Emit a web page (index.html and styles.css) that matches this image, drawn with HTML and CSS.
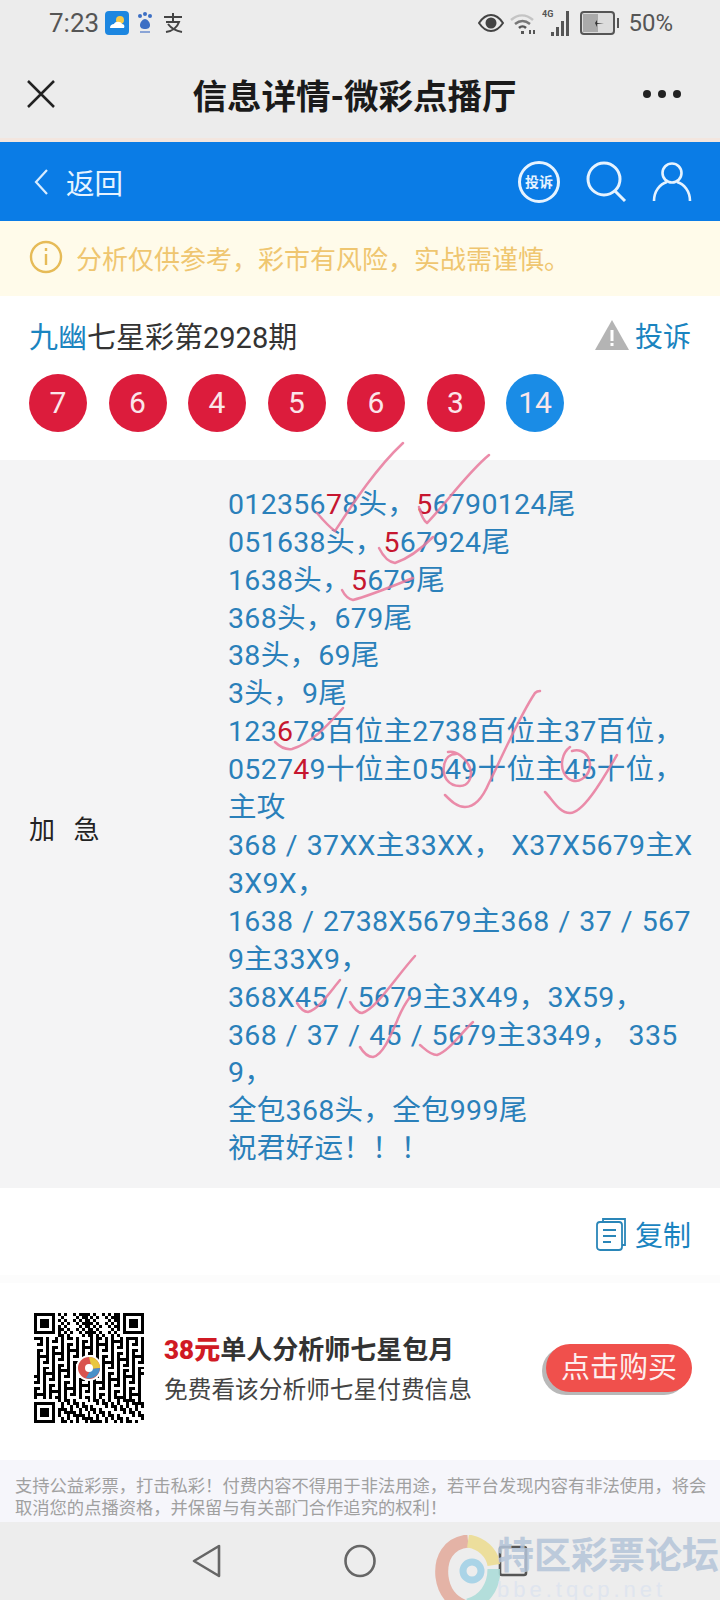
FILE: index.html
```html
<!DOCTYPE html>
<html lang="zh-CN">
<head>
    <meta charset="UTF-8">
    <title>信息详情-微彩点播厅</title>
    <link rel="stylesheet" href="styles.css">
</head>
<body>
    <div class="page">
        <div class="status">
            <div class="status-left">
                <span class="time">7:23</span>
                <svg class="st-app" width="24" height="24" viewBox="0 0 24 24"><rect width="24" height="24" rx="4" fill="#1c86e0"/><circle cx="15" cy="9" r="4" fill="#f7c948"/><path d="M5 17c0-3 2-4 4-4 1-3 7-3 8 0 2 0 3 2 2 4z" fill="#fff"/></svg>
                <svg class="st-app" width="20" height="26" viewBox="0 0 20 26"><circle cx="5" cy="6" r="2" fill="#3d6fc4"/><circle cx="10" cy="4" r="2" fill="#3d6fc4"/><circle cx="15" cy="6" r="2" fill="#3d6fc4"/><path d="M5 15c0-3 3-6 5-6s5 3 5 6-2 4-5 4-5-1-5-4z" fill="#3d6fc4"/><rect x="5" y="21" width="10" height="2" fill="#8aa4d6"/></svg>
                <svg class="st-app" width="24" height="24" viewBox="0 0 24 24" fill="none" stroke="#444" stroke-width="2"><path d="M3 6h18M12 2v8M5 11h13c-2 6-7 9-13 10M7 13c3 4 8 7 14 8"/></svg>
            </div>
            <div class="status-right">
                <svg width="26" height="20" viewBox="0 0 26 20"><path d="M1 10c4-6 8-8 12-8s8 2 12 8c-4 6-8 8-12 8S5 16 1 10z" fill="none" stroke="#444" stroke-width="2"/><circle cx="13" cy="10" r="5.5" fill="#444"/></svg>
                <svg width="26" height="26" viewBox="0 0 26 26" fill="none" stroke-width="2.5"><path d="M1 10c7-6 15-6 22 0" stroke="#c4c4c4"/><path d="M5 14c5-4 10-4 15 0" stroke="#777"/><path d="M9 18c2-2 5-2 7 0" stroke="#555"/><rect x="11" y="21" width="3" height="3" fill="#555" stroke="none"/><rect x="19" y="20" width="2" height="4" fill="#555" stroke="none"/><rect x="23" y="20" width="2" height="4" fill="#555" stroke="none"/></svg>
                <svg class="st-signal" width="32" height="30" viewBox="0 0 32 30" fill="#555"><text x="0" y="9" class="st-4g">4G</text><rect x="9" y="24" width="3" height="4"/><rect x="14" y="19" width="3" height="9"/><rect x="19" y="13" width="3" height="15"/><rect x="24" y="3" width="3" height="25"/></svg>
                <svg width="40" height="26" viewBox="0 0 40 26"><rect x="1" y="2" width="33" height="22" rx="3" fill="#ddd" stroke="#555" stroke-width="2"/><rect x="3" y="4" width="15" height="18" fill="#aaa"/><path d="M8 13h7l2-3v3h7l-7 1v3l-2-4H8z" fill="#333"/><rect x="37" y="8" width="2" height="10" fill="#555"/></svg>
                <span class="battery">50%</span>
            </div>
        </div>

        <div class="titlebar">
            <svg class="title-close" width="30" height="30" viewBox="0 0 30 30" fill="none" stroke="#222" stroke-width="2.5"><path d="M2 2l26 26M28 2L2 28"/></svg>
            <h1>信息详情-微彩点播厅</h1>
            <div class="title-more"><i></i><i></i><i></i></div>
        </div>

        <header class="topnav">
            <div class="back">
                <svg width="16" height="28" viewBox="0 0 16 28" fill="none" stroke="#d8ecff" stroke-width="2.2"><path d="M14 2L3 14l11 12"/></svg>
                <span>返回</span>
            </div>
            <div class="topnav-icons">
                <div class="complain-badge">投诉</div>
                <svg width="42" height="42" viewBox="0 0 42 42" fill="none" stroke="#e6f3ff" stroke-width="3"><circle cx="18" cy="18" r="16"/><path d="M29 30l10 10"/></svg>
                <svg width="40" height="42" viewBox="0 0 40 42" fill="none" stroke="#e6f3ff" stroke-width="2.6"><circle cx="20" cy="12" r="9.5"/><path d="M2 40c0-10 6-17 13-19M38 40c0-10-6-17-13-19"/></svg>
            </div>
        </header>

        <div class="notice">
            <svg width="34" height="34" viewBox="0 0 34 34" fill="none" stroke="#e6bb57" stroke-width="2.4"><circle cx="17" cy="17" r="15"/><path d="M17 14v11M17 8v3"/></svg>
            <span>分析仅供参考，彩市有风险，实战需谨慎。</span>
        </div>

        <section class="issue">
            <div class="issue-head">
                <div class="issue-title"><span class="author">九幽</span>七星彩第2928期</div>
                <div class="issue-report">
                    <svg width="36" height="32" viewBox="0 0 36 32"><path d="M18 1l17 30H1z" fill="#b4b4b4"/><rect x="16.500" y="11" width="3" height="11" fill="#fff"/><rect x="16.500" y="24" width="3" height="3" fill="#fff"/></svg>
                    <span>投诉</span>
                </div>
            </div>
            <div class="balls">
                <span class="ball">7</span>
                <span class="ball">6</span>
                <span class="ball">4</span>
                <span class="ball">5</span>
                <span class="ball">6</span>
                <span class="ball">3</span>
                <span class="ball ball-blue">14</span>
            </div>
        </section>

        <section class="content">
            <div class="content-label">加 急</div>
            <div class="content-text">
                <div>012356<em>7</em>8头，<em>5</em>6790124尾</div>
                <div>051638头，<em>5</em>67924尾</div>
                <div>1638头，<em>5</em>679尾</div>
                <div>368头，679尾</div>
                <div>38头，69尾</div>
                <div>3头，9尾</div>
                <div>123<em>6</em>78百位主2738百位主37百位，</div>
                <div>0527<em>4</em>9十位主0549十位主45十位，</div>
                <div>主攻</div>
                <div>368 / 37XX主33XX，&nbsp;X37X5679主X</div>
                <div>3X9X，</div>
                <div>1638 / 2738X5679主368 / 37 / 567</div>
                <div>9主33X9，</div>
                <div>368X45 / 5679主3X49，3X59，</div>
                <div>368 / 37 / 45 / 5679主3349，&nbsp;335</div>
                <div>9，</div>
                <div>全包368头，全包999尾</div>
                <div>祝君好运！！！</div>
            </div>
        </section>

        <div class="copy-row">
            <svg width="32" height="34" viewBox="0 0 32 34" fill="none" stroke="#2a86b8" stroke-width="1.8"><path d="M8 5V2h22v26h-3"/><rect x="2" y="5" width="25" height="28" rx="3"/><path d="M8 13h13M8 19h13M8 25h8"/></svg>
            <span>复制</span>
        </div>

        <section class="promo">
            <div class="qr">
                <svg id="qr-code" width="110" height="110" viewBox="0 0 37 37" shape-rendering="crispEdges"></svg>
                <svg class="qr-logo" width="26" height="26" viewBox="0 0 26 26"><circle cx="13" cy="13" r="13" fill="#fff"/><circle cx="13" cy="13" r="11" fill="#d9534f"/><path d="M13 2a11 11 0 0 1 11 11l-8 1z" fill="#e8c63f"/><path d="M24 13a11 11 0 0 1-14 10l5-9z" fill="#4a90c8"/><circle cx="13" cy="13" r="4" fill="#fff"/></svg>
            </div>
            <div class="promo-text">
                <div class="promo-title"><b>38元</b>单人分析师七星包月</div>
                <div class="promo-sub">免费看该分析师七星付费信息</div>
            </div>
            <div class="buy-btn">点击购买</div>
        </section>

        <div class="disclaimer">支持公益彩票，打击私彩！付费内容不得用于非法用途，若平台发现内容有非法使用，将会取消您的点播资格，并保留与有关部门合作追究的权利！</div>

        <nav class="sysnav">
            <svg width="30" height="34" viewBox="0 0 30 34" fill="none" stroke="#666" stroke-width="2.6" stroke-linejoin="round"><path d="M27 2v30L2 17z"/></svg>
            <svg width="32" height="34" viewBox="0 0 32 34" fill="none" stroke="#666" stroke-width="2.6"><ellipse cx="16" cy="17" rx="14.500" ry="15"/></svg>
            <svg width="30" height="32" viewBox="0 0 30 32" fill="none" stroke="#555" stroke-width="2.6"><rect x="2" y="2" width="26" height="28" rx="2"/></svg>
        </nav>

        <!-- 水印 -->
        <div class="watermark">
            <svg width="66" height="84" viewBox="0 0 66 84" fill="none" stroke-width="13"><path d="M34 6C14 8 6 24 8 42c2 16 12 26 24 30" stroke="#e3a99a"/><path d="M34 6c14 2 24 12 26 24" stroke="#ecdc8e"/><path d="M60 34c0 18-10 32-26 36" stroke="#a9dcd8"/><circle cx="38" cy="36" r="9" stroke="#9fd0e6" stroke-width="7"/></svg>
            <div class="watermark-text">
                <div class="wm-name">特区彩票论坛</div>
                <div class="wm-url">bbe.tqcp.net</div>
            </div>
        </div>

        <!-- 手写的勾 -->
        <svg class="ticks" width="720" height="1600" viewBox="0 0 720 1600" fill="none" stroke="#e9799c" stroke-width="2.5" stroke-linecap="round" stroke-linejoin="round">
            <path d="M317 513c6 7 12 14 18 18 12-18 38-60 68-88"/>
            <path d="M419 507c2 8 4 13 8 16 16-16 40-50 62-68"/>
            <path d="M379 548c4 8 9 14 16 15 12-4 26-14 38-26"/>
            <path d="M342 590c3 6 6 9 11 10 16-4 40-14 60-22"/>
            <path d="M275 742c5 5 10 8 17 7 20-6 36-24 51-41"/>
            <path d="M445 795c6 6 12 12 20 12 10 0 18-10 24-24 14-28 30-66 46-90 2-2 4-2 5-2"/>
            <path d="M448 752c8-2 18 6 22 16 3 10-2 18-10 18-12 0-18-10-16-20 1-8 6-12 12-12"/>
            <path d="M545 792c8 8 14 21 25 21 14 0 34-36 47-58"/>
            <path d="M570 747c-8 6-10 18-6 26 4 8 12 10 18 6 8-5 10-14 6-22-3-6-10-8-16-6"/>
            <path d="M297 1003c3 5 7 9 11 9 10-2 22-20 32-32"/>
            <path d="M350 1002c3 5 7 11 12 11 14-4 34-36 53-57"/>
            <path d="M360 1047c3 5 7 10 13 10 10-2 18-22 24-36 4-10 10-20 13-24"/>
            <path d="M420 1045c5 4 10 10 17 10 12-4 24-22 36-33"/>
        </svg>
    </div>
    <script src="qr.js"></script>
</body>
</html>
```

FILE: styles.css
```css
* {
    box-sizing: border-box;
}
body {
    margin: 0;
    font-family: Roboto, "Noto Sans CJK SC", sans-serif;
    background: #fff;
}
.page {
    position: relative;
    width: 720px;
    height: 1600px;
    overflow: hidden;
    display: flex;
    flex-direction: column;
}
.status {
    height: 50px;
    background: #ececec;
    padding: 0 47px 4px 49px;
    display: flex;
    justify-content: space-between;
    align-items: center;
    color: #555;
}
.status-left, .status-right {
    display: flex;
    align-items: center;
}
.status-left {
    gap: 6px;
}
.status-right {
    gap: 6px;
}
.time {
    font-size: 26px;
}
.st-4g {
    font-size: 9px;
    font-weight: 700;
}
.battery {
    font-size: 24px;
    margin-left: 2px;
}
.titlebar {
    height: 92px;
    background: #ececec;
    border-bottom: 4px solid #f3e6df;
    padding: 0 39px 0 26px;
    display: flex;
    justify-content: space-between;
    align-items: center;
}
.titlebar h1 {
    margin: 0 0 0 10px;
    font-size: 34.500px;
    font-weight: 700;
    color: #1a1a1a;
}
.title-more {
    display: flex;
    gap: 7px;
}
.title-more i {
    width: 8px;
    height: 8px;
    border-radius: 50%;
    background: #222;
}
.topnav {
    height: 79px;
    background: #0a7ce6;
    padding: 0 28px 0 33px;
    display: flex;
    justify-content: space-between;
    align-items: center;
}
.back {
    display: flex;
    align-items: center;
    gap: 17px;
    color: #e6f3ff;
    font-size: 28.500px;
}
.topnav-icons {
    display: flex;
    align-items: center;
    gap: 24px;
}
.complain-badge {
    width: 42px;
    height: 42px;
    margin-right: 2px;
    border: 3px solid #e6f3ff;
    border-radius: 50%;
    color: #e6f3ff;
    font-size: 14px;
    font-weight: 700;
    line-height: 36px;
    text-align: center;
    white-space: nowrap;
}
.notice {
    height: 75px;
    background: #fffbea;
    padding: 0 0 3px 29px;
    display: flex;
    align-items: center;
    gap: 13px;
    color: #efc670;
    font-size: 26px;
}
.issue {
    height: 164px;
    padding: 0 29px 0 29px;
}
.issue-head {
    height: 78px;
    display: flex;
    justify-content: space-between;
    align-items: center;
}
.issue-title {
    font-size: 29px;
    color: #333;
}
.author {
    color: #1a84c0;
}
.issue-report {
    display: flex;
    align-items: center;
    gap: 5px;
    font-size: 28px;
    color: #1a84c0;
}
.balls {
    display: flex;
    gap: 21.500px;
}
.ball {
    width: 58px;
    height: 58px;
    border-radius: 50%;
    background: #dc1c3c;
    color: #fbe6ea;
    font-size: 30px;
    line-height: 58px;
    text-align: center;
}
.ball-blue {
    background: #1a8ce6;
}
.content {
    height: 728px;
    background: #f4f4f5;
    padding: 6px 0 0 29px;
    display: flex;
    align-items: center;
}
.content-label {
    width: 199px;
    flex: none;
    font-size: 26px;
    color: #222;
    white-space: pre;
    word-spacing: 12px;
}
.content-text {
    font-size: 28.500px;
    line-height: 37.900px;
    letter-spacing: 0.3px;
    word-spacing: 1.500px;
    color: #2a80ba;
    white-space: nowrap;
}
.content-text em {
    font-style: normal;
    color: #c6162f;
}
.copy-row {
    height: 87px;
    padding: 4px 29px 0 0;
    display: flex;
    justify-content: flex-end;
    align-items: center;
    gap: 8px;
    font-size: 28px;
    color: #1a84c0;
}
.promo {
    height: 185px;
    border-top: 8px solid #fcfcfc;
    padding: 0 28px 8px 34px;
    display: flex;
    align-items: center;
}
.qr {
    position: relative;
    width: 110px;
    height: 110px;
    flex: none;
}
.qr-logo {
    position: absolute;
    left: 42px;
    top: 42px;
}
.promo-text {
    margin: 4px 0 0 20px;
    flex: 1;
}
.promo-title {
    font-size: 26px;
    font-weight: 700;
    color: #333;
    line-height: 40px;
    white-space: nowrap;
}
.promo-title b {
    color: #d01a24;
}
.promo-sub {
    font-size: 23.700px;
    color: #444;
    line-height: 40px;
    white-space: nowrap;
}
.buy-btn {
    width: 146px;
    height: 48px;
    flex: none;
    border-radius: 24px;
    background: #f0504c;
    box-shadow: -4px 3px 0 #b8b8b8;
    color: #fdeeee;
    font-size: 29px;
    line-height: 48px;
    text-align: center;
}
.disclaimer {
    height: 62px;
    background: #f6f6fb;
    padding: 15px 10px 0 15px;
    font-size: 17.300px;
    line-height: 22px;
    color: #a0a0a0;
}
.sysnav {
    height: 78px;
    background: #ededed;
    padding: 0 0 0 192px;
    display: flex;
    align-items: center;
    gap: 122px;
}
.watermark {
    position: absolute;
    left: 434px;
    top: 1535px;
    display: flex;
    opacity: 0.85;
}
.watermark-text {
    margin-left: -3px;
}
.wm-name {
    font-size: 37px;
    font-weight: 700;
    line-height: 44px;
    color: #b4c4d8;
    white-space: nowrap;
}
.wm-url {
    font-family: "Liberation Sans", sans-serif;
    margin-top: -1px;
    font-size: 22px;
    line-height: 24px;
    letter-spacing: 4px;
    color: #dde4f0;
    white-space: nowrap;
}
.ticks {
    position: absolute;
    left: 0;
    top: 0;
    pointer-events: none;
    opacity: 0.85;
}
```

FILE: qr.js
```js
// 二维码只是画出来的样子，不能真的扫
var size = 37;
var seed = 2928;
var d = '';

function next() {
    seed = (seed * 1103 + 12345) % 65536;
    return (seed >> 7) % 2;
}

function finder(x, y) {
    return 'M' + x + ' ' + y + 'h7v7h-7zM' + (x + 1) + ' ' + (y + 1) + 'v5h5v-5zM' + (x + 2) + ' ' + (y + 2) + 'h3v3h-3z';
}

function inFinder(x, y) {
    return (x < 8 && y < 8) || (x >= size - 8 && y < 8) || (x < 8 && y >= size - 8);
}

for (var y = 0; y < size; y++) {
    for (var x = 0; x < size; x++) {
        if (!inFinder(x, y) && next()) {
            d += 'M' + x + ' ' + y + 'h1v1h-1z';
        }
    }
}
d += finder(0, 0) + finder(size - 7, 0) + finder(0, size - 7);

var path = document.createElementNS('http://www.w3.org/2000/svg', 'path');
path.setAttribute('d', d);
path.setAttribute('fill', '#000');
path.setAttribute('fill-rule', 'evenodd');
document.getElementById('qr-code').appendChild(path);
```
